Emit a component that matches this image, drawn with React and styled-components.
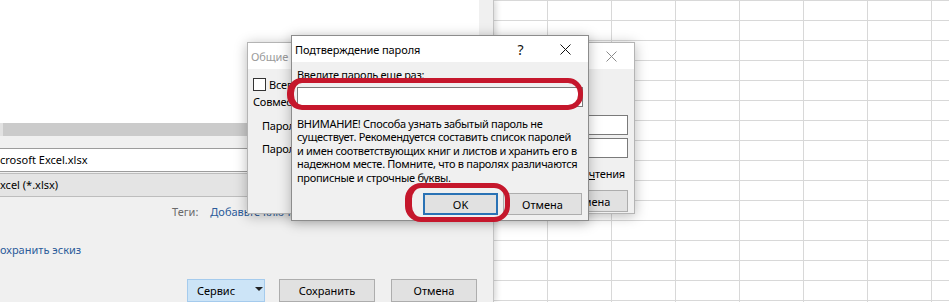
import React from "react";
import styled, { createGlobalStyle } from "styled-components";

const GlobalStyle = createGlobalStyle`
  html, body { margin: 0; padding: 0; background: #fff; }
  body {
    font-family: "Noto Sans", "Open Sans", sans-serif;
    font-size: 11px;
    color: #000;
  }
  #root { width: 949px; height: 302px; }
  * { box-sizing: border-box; }
`;

const Screen = styled.div`
  position: relative;
  width: 949px;
  height: 302px;
  display: flex;
  overflow: hidden;
`;

/* ---------- Save As dialog (left) ---------- */
const SaveDialog = styled.div`
  position: relative;
  z-index: 1;
  flex: none;
  width: 494px;
  background: #f0f0f0;
  border-right: 1px solid #c4c4c4;
  box-shadow: 2px 0 6px rgba(0, 0, 0, 0.16);
  display: flex;
  flex-direction: column;
`;

const FileList = styled.div`
  height: 127px;
  margin-right: 14px;
  background: #fff;
`;

const ScrollTrack = styled.div`
  height: 14px;
  margin-right: 14px;
  background: #cbcbcb;
  border-left: 3px solid #e2e2e2;
`;

const Fields = styled.div`
  margin: 12px 14px 0 0;
  display: flex;
  flex-direction: column;
  gap: 1px;
`;

const Field = styled.div`
  height: 24px;
  line-height: 22px;
  background: ${(p) => (p.$combo ? "#e4e4e4" : "#fff")};
  border-top: 1px solid ${(p) => (p.$combo ? "#bdbdbd" : "#9c9c9c")};
  border-bottom: 1px solid ${(p) => (p.$combo ? "#bdbdbd" : "#9c9c9c")};
  white-space: nowrap;
  overflow: hidden;
`;

const TagsRow = styled.div`
  margin-top: 7px;
  height: 16px;
  line-height: 16px;
  padding-left: 172px;
  display: flex;
  gap: 12px;
  white-space: nowrap;
`;

const TagLabel = styled.span`
  color: #6a6a6a;
`;

const Link = styled.span`
  color: #2b5b9a;
`;

const ThumbRow = styled.div`
  margin-top: 22px;
  height: 16px;
  line-height: 16px;
  color: #2b5b9a;
  white-space: nowrap;
`;

const ButtonRow = styled.div`
  margin-top: 21px;
  padding-left: 187px;
  display: flex;
  gap: 14px;
`;

const WinButton = styled.div`
  flex: none;
  width: ${(p) => p.$w}px;
  height: ${(p) => p.$h || 23}px;
  margin-left: ${(p) => p.$ml || 0}px;
  background: ${(p) => (p.$hot ? "#cce4f7" : "#e1e1e1")};
  border: ${(p) =>
    p.$focus ? "2px solid #2a72b5" : p.$hot ? "1px solid #a5cbed" : "1px solid #adadad"};
  display: flex;
  align-items: center;
  justify-content: center;
  gap: 20px;
  padding-left: ${(p) => (p.$hot ? 8 : 0)}px;
  white-space: nowrap;
  line-height: 1;
`;

const Caret = styled.span`
  width: 0;
  height: 0;
  border-left: 4px solid transparent;
  border-right: 4px solid transparent;
  border-top: 4px solid #222;
  margin-top: -4px;
`;

/* ---------- Excel sheet ---------- */
const Sheet = styled.div`
  flex: 1;
  background-color: #fff;
  background-image: linear-gradient(to right, #d8d8d8 1px, transparent 1px),
    linear-gradient(to bottom, #d8d8d8 1px, transparent 1px);
  background-size: 64px 100%, 100% 20px;
  background-position: 53px 0, 0 0;
`;

/* ---------- Dialog windows ---------- */
const Window = styled.div`
  position: absolute;
  left: ${(p) => p.$x}px;
  top: ${(p) => p.$y}px;
  width: ${(p) => p.$w}px;
  height: ${(p) => p.$h}px;
  z-index: ${(p) => p.$z};
  background: #f0f0f0;
  border: 1px solid ${(p) => (p.$active ? "#8c8c8c" : "#b4b4b4")};
  box-shadow: 0 2px 12px rgba(0, 0, 0, 0.28);
  display: flex;
  flex-direction: column;
  letter-spacing: -0.2px;
`;

const TitleBar = styled.div`
  flex: none;
  height: ${(p) => p.$h}px;
  background: #fff;
  display: flex;
  align-items: center;
  padding-left: 3px;
  letter-spacing: -0.1px;
  color: ${(p) => (p.$active ? "#000" : "#9a9a9a")};
  white-space: nowrap;
`;

const TitleText = styled.span`
  flex: 1;
  overflow: hidden;
`;

const CaptionButton = styled.div`
  flex: none;
  width: 45px;
  height: 100%;
  display: flex;
  align-items: center;
  justify-content: center;
  font-size: 14px;
  color: #111;
`;

const CloseIcon = ({ color = "#111" }) => (
  <svg width="11" height="11" viewBox="0 0 11 11">
    <path d="M0.5 0.5 L10.5 10.5 M10.5 0.5 L0.5 10.5" stroke={color} strokeWidth="1" fill="none" />
  </svg>
);

/* back dialog body */
const BackBody = styled.div`
  flex: 1;
  padding: 9px 6px 0 5px;
  display: flex;
  flex-direction: column;
  white-space: nowrap;
`;

const CheckRow = styled.div`
  height: 13px;
  display: flex;
  align-items: center;
  gap: 3px;
  margin-top: ${(p) => p.$mt || 0}px;
  justify-content: ${(p) => (p.$right ? "flex-end" : "flex-start")};
  padding-right: ${(p) => (p.$right ? 3 : 0)}px;
`;

const Box = styled.span`
  flex: none;
  width: 13px;
  height: 13px;
  border: 1px solid #333;
  background: #fff;
`;

const PlainRow = styled.div`
  margin-top: ${(p) => p.$mt}px;
  height: 16px;
  line-height: 16px;
`;

const PwdRow = styled.div`
  margin-top: ${(p) => p.$mt}px;
  height: 20px;
  padding-left: 9px;
  display: flex;
  align-items: center;
  justify-content: space-between;
`;

const TextBox = styled.div`
  flex: none;
  width: ${(p) => p.$w}px;
  height: ${(p) => p.$h || 20}px;
  margin-top: ${(p) => p.$mt || 0}px;
  background: #fff;
  border: 1px solid #7a7a7a;
`;

const DialogButtons = styled.div`
  margin-top: ${(p) => p.$mt || 0}px;
  display: flex;
  justify-content: flex-end;
  gap: 5px;
  letter-spacing: 0;
`;

/* front dialog body */
const FrontBody = styled.div`
  flex: 1;
  padding: 5px 6px 6px 5px;
  display: flex;
  flex-direction: column;
  letter-spacing: -0.3px;
`;

const Prompt = styled.div`
  height: 16px;
  line-height: 16px;
  white-space: nowrap;
`;

const Warning = styled.p`
  margin: 10px 0 0;
  line-height: 13.4px;
  white-space: nowrap;
`;

/* red hand-drawn marks */
const Mark = styled.div`
  position: absolute;
  z-index: 5;
  left: ${(p) => p.$x}px;
  top: ${(p) => p.$y}px;
  width: ${(p) => p.$w}px;
  height: ${(p) => p.$h}px;
  border: 5px solid #c5172c;
  border-left-width: 7px;
  border-radius: ${(p) => p.$r}px;
`;

export default function App() {
  return (
    <>
      <GlobalStyle />
      <Screen>
        <SaveDialog>
          <FileList />
          <ScrollTrack />
          <Fields>
            <Field>crosoft Excel.xlsx</Field>
            <Field $combo>xcel (*.xlsx)</Field>
          </Fields>
          <TagsRow>
            <TagLabel>Теги:</TagLabel>
            <Link>Добавьте ключевое слово</Link>
          </TagsRow>
          <ThumbRow>охранить эскиз</ThumbRow>
          <ButtonRow>
            <WinButton $w={78} $hot>
              Сервис <Caret />
            </WinButton>
            <WinButton $w={96}>Сохранить</WinButton>
            <WinButton $w={86} $ml={2}>Отмена</WinButton>
          </ButtonRow>
        </SaveDialog>
        <Sheet />

        <Window $x={247} $y={42} $w={388} $h={172} $z={2}>
          <TitleBar $h={26}>
            <TitleText>Общие параметры</TitleText>
            <CaptionButton>
              <CloseIcon color="#8a8a8a" />
            </CaptionButton>
          </TitleBar>
          <BackBody>
            <CheckRow>
              <Box />
              Всегда создавать резервную копию
            </CheckRow>
            <PlainRow $mt={3}>Совместный доступ к файлу</PlainRow>
            <PwdRow $mt={5}>
              Пароль для открытия:
              <TextBox $w={200} />
            </PwdRow>
            <PwdRow $mt={3}>
              Пароль для изменения:
              <TextBox $w={200} />
            </PwdRow>
            <CheckRow $mt={9} $right>
              <Box />
              <span>
                Рекомендовать доступ только для <u>ч</u>тения
              </span>
            </CheckRow>
            <DialogButtons $mt={10}>
              <WinButton $w={76} $h={22}>OK</WinButton>
              <WinButton $w={76} $h={22}>Отмена</WinButton>
            </DialogButtons>
          </BackBody>
        </Window>

        <Window $x={291} $y={35} $w={298} $h={186} $z={3} $active>
          <TitleBar $h={26} $active>
            <TitleText>Подтверждение пароля</TitleText>
            <CaptionButton>?</CaptionButton>
            <CaptionButton>
              <CloseIcon />
            </CaptionButton>
          </TitleBar>
          <FrontBody>
            <Prompt>Введите пароль еще раз:</Prompt>
            <TextBox $w={286} $h={20} $mt={4} />
            <Warning>
              ВНИМАНИЕ! Способа узнать забытый пароль не
              <br />
              существует. Рекомендуется составить список паролей
              <br />
              и имен соответствующих книг и листов и хранить его в
              <br />
              надежном месте. Помните, что в паролях различаются
              <br />
              прописные и строчные буквы.
            </Warning>
            <DialogButtons $mt={9}>
              <WinButton $w={75} $h={22} $focus>OK</WinButton>
              <WinButton $w={79} $h={22}>Отмена</WinButton>
            </DialogButtons>
          </FrontBody>
        </Window>

        <Mark $x={287} $y={78} $w={296} $h={32} $r={15} />
        <Mark $x={405} $y={183} $w={105} $h={39} $r={16} />
      </Screen>
    </>
  );
}
